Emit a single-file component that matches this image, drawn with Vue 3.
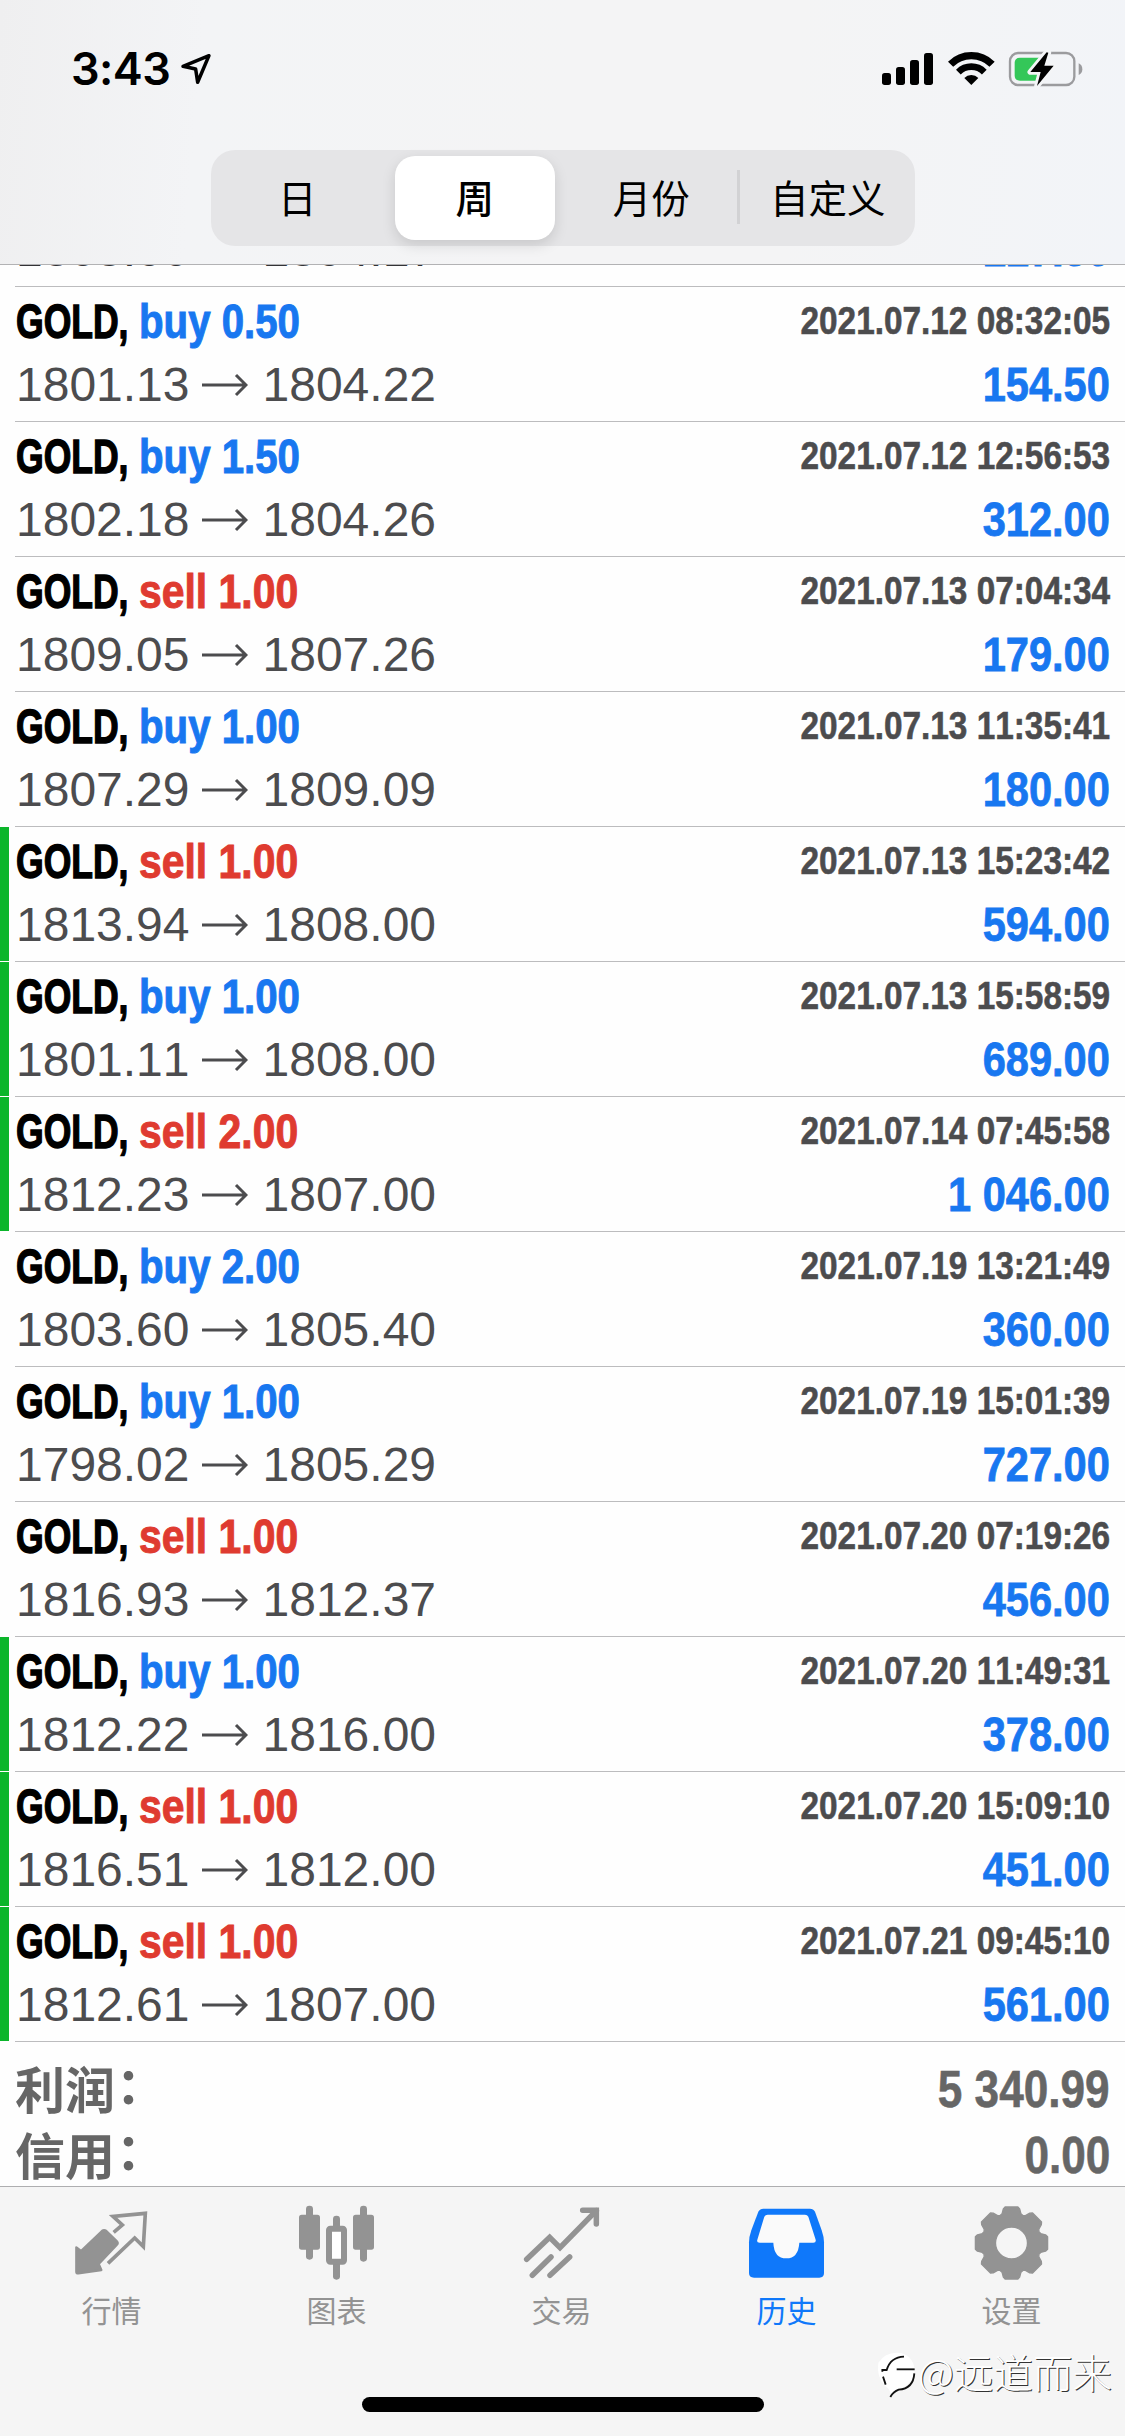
<script setup>
const periods = ['日', '周', '月份', '自定义']
const activePeriod = '周'

const deals = [
  { side: 'buy', lots: '0.50', open: '1801.13', close: '1804.22', time: '2021.07.12 08:32:05', profit: '154.50' },
  { side: 'buy', lots: '1.50', open: '1802.18', close: '1804.26', time: '2021.07.12 12:56:53', profit: '312.00' },
  { side: 'sell', lots: '1.00', open: '1809.05', close: '1807.26', time: '2021.07.13 07:04:34', profit: '179.00' },
  { side: 'buy', lots: '1.00', open: '1807.29', close: '1809.09', time: '2021.07.13 11:35:41', profit: '180.00' },
  { side: 'sell', lots: '1.00', open: '1813.94', close: '1808.00', time: '2021.07.13 15:23:42', profit: '594.00', tp: true },
  { side: 'buy', lots: '1.00', open: '1801.11', close: '1808.00', time: '2021.07.13 15:58:59', profit: '689.00', tp: true },
  { side: 'sell', lots: '2.00', open: '1812.23', close: '1807.00', time: '2021.07.14 07:45:58', profit: '1 046.00', tp: true },
  { side: 'buy', lots: '2.00', open: '1803.60', close: '1805.40', time: '2021.07.19 13:21:49', profit: '360.00' },
  { side: 'buy', lots: '1.00', open: '1798.02', close: '1805.29', time: '2021.07.19 15:01:39', profit: '727.00' },
  { side: 'sell', lots: '1.00', open: '1816.93', close: '1812.37', time: '2021.07.20 07:19:26', profit: '456.00' },
  { side: 'buy', lots: '1.00', open: '1812.22', close: '1816.00', time: '2021.07.20 11:49:31', profit: '378.00', tp: true },
  { side: 'sell', lots: '1.00', open: '1816.51', close: '1812.00', time: '2021.07.20 15:09:10', profit: '451.00', tp: true },
  { side: 'sell', lots: '1.00', open: '1812.61', close: '1807.00', time: '2021.07.21 09:45:10', profit: '561.00', tp: true }
]

const totals = [
  { label: '利润', value: '5 340.99' },
  { label: '信用', value: '0.00' }
]

// Eight-toothed gear outline, centred on (cx, cy)
function gearPath(cx, cy) {
  const profile = [[-22.5, 89], [-18, 92], [-13.5, 105], [-10, 110], [10, 110], [13.5, 105], [18, 92]]
  const pts = []
  for (let t = 0; t < 8; t++) {
    for (const [a, r] of profile) {
      const rad = ((t * 45 + a - 90) * Math.PI) / 180
      pts.push(`${(cx + r * Math.cos(rad)).toFixed(1)} ${(cy + r * Math.sin(rad)).toFixed(1)}`)
    }
  }
  return `M${pts.join('L')}Z M${cx - 48} ${cy}a48 48 0 1 0 96 0a48 48 0 1 0 -96 0Z`
}
const gear = gearPath(424.5, 160)
</script>

<template>
  <div class="screen">
    <header class="header">
      <div class="status">
        <div class="clock">
          <span class="time">3:43</span>
          <svg class="location" viewBox="355 35 100 100" fill="none" stroke="#000" stroke-width="10.500" stroke-linejoin="round">
            <path d="M445 46L367 78L405 86L411 126Z" />
          </svg>
        </div>
        <svg class="indicators" viewBox="0 0 720 180">
          <rect x="66" y="99" width="27" height="36" rx="8" />
          <rect x="108" y="81" width="27" height="54" rx="8" />
          <rect x="150" y="60" width="27" height="75" rx="8" />
          <rect x="192" y="39" width="27" height="96" rx="8" />
          <path d="M271.800 72.800A88 88 0 0 1 396.200 72.800" fill="none" stroke="#000" stroke-width="22" />
          <path d="M295.100 96.100A55 55 0 0 1 372.900 96.100" fill="none" stroke="#000" stroke-width="20" />
          <path d="M334 135L313 114A29 29 0 0 1 355 114Z" />
          <rect x="450" y="39" width="193" height="96" rx="25" fill="none" stroke="#9b9b9e" stroke-width="7" />
          <path d="M656 70Q667 75 667 87.500T656 105Z" fill="#9b9b9e" />
          <path d="M480 53H545V122H480Q464 122 464 106V69Q464 53 480 53Z" fill="#34c759" />
          <path d="M560 37L511 96H542L531 138L581 77H553L565 38Z" stroke="#f4f5f7" stroke-width="17" stroke-linejoin="round" />
          <path d="M560 37L511 96H542L531 138L581 77H553L565 38Z" />
        </svg>
      </div>
      <nav class="segments">
        <button v-for="p in periods" :key="p" class="segment" :class="{ active: p === activePeriod }">{{ p }}</button>
      </nav>
    </header>

    <main class="list">
      <div class="peek">
        <article class="deal">
          <div class="line">
            <span class="prices">1803.00<svg class="arrow" viewBox="0 0 46 24"><path d="M0 12H44M34 2L44 12L34 22" /></svg>1804.17</span>
            <span class="profit">117.50</span>
          </div>
        </article>
      </div>
      <div class="rule"></div>
      <template v-for="d in deals" :key="d.time">
        <article class="deal" :class="{ tp: d.tp }">
          <div class="line">
            <span class="title"><span class="symbol">GOLD,</span><span class="side" :class="d.side">{{ d.side }} {{ d.lots }}</span></span>
            <span class="stamp">{{ d.time }}</span>
          </div>
          <div class="line">
            <span class="prices">{{ d.open }}<svg class="arrow" viewBox="0 0 46 24"><path d="M0 12H44M34 2L44 12L34 22" /></svg>{{ d.close }}</span>
            <span class="profit">{{ d.profit }}</span>
          </div>
        </article>
        <div class="rule"></div>
      </template>
      <section class="totals">
        <div v-for="t in totals" :key="t.label" class="total">
          <span class="label">{{ t.label }}<span class="colon">：</span></span>
          <span class="sum">{{ t.value }}</span>
        </div>
      </section>
    </main>

    <footer class="tabs">
      <div class="tab">
        <svg class="icon" viewBox="210 550 255 240">
          <path d="M229 683L243 694L306 634Q312 629 319 634L350 664Q356 670 350 676L296 733L304 751L235 761Q229 761 229 756Z" fill="currentColor" stroke="currentColor" stroke-width="7" stroke-linejoin="round" />
          <path d="M341 638L367 616L339 590L436 581L430 681L404 655L324 731" fill="none" stroke="currentColor" stroke-width="11" />
        </svg>
        <span>行情</span>
      </div>
      <div class="tab">
        <svg class="icon" viewBox="885 550 255 240" fill="currentColor">
          <rect x="918" y="558" width="21" height="162" rx="10" />
          <rect x="897" y="585" width="63" height="105" rx="8" />
          <rect x="1080" y="558" width="21" height="168" rx="10" />
          <rect x="1059" y="585" width="63" height="105" rx="8" />
          <rect x="999" y="588" width="21" height="60" rx="10" />
          <rect x="999" y="722" width="21" height="58" rx="10" />
          <rect x="987" y="627" width="45" height="99" rx="4" fill="#fff" stroke="currentColor" stroke-width="18" />
        </svg>
        <span>图表</span>
      </div>
      <div class="tab">
        <svg class="icon" viewBox="60 40 255 240" fill="none" stroke="currentColor" stroke-width="16.500" stroke-linecap="round">
          <path d="M80 209L149 143L180 174L289 63" />
          <path d="M248 62H289V103" />
          <path d="M97 257L153 202M150 257L209 202" />
        </svg>
        <span>交易</span>
      </div>
      <div class="tab current">
        <svg class="icon" viewBox="735 40 255 240">
          <path d="M790 57H930Q940 57 945 66L965 122Q972 142 972 158V250Q972 264 958 264H762Q747 264 747 250V158Q747 142 754 122L775 66Q780 57 790 57Z" fill="currentColor" />
          <path d="M803 75H915Q922 75 925 81L947 150Q949 159 940 159H898Q895 206 859 206Q822 206 820 159H779Q769 159 772 150L793 81Q796 75 803 75Z" fill="#fafafa" />
        </svg>
        <span>历史</span>
      </div>
      <div class="tab">
        <svg class="icon" viewBox="300 40 255 240">
          <path :d="gear" fill="currentColor" fill-rule="evenodd" stroke="currentColor" stroke-width="4" stroke-linejoin="round" />
        </svg>
        <span>设置</span>
      </div>
    </footer>

    <div class="home-bar"></div>
    <div class="credit">
      <svg class="credit-logo" viewBox="18 485 120 145" fill="none" stroke="#111" stroke-width="5.500">
        <path d="M25 520Q45 488 85 490Q128 495 134 540Q132 580 98 595Q74 602 64 620Q62 600 45 590Q18 560 25 520Z" fill="#fff" stroke="none" />
        <path d="M37 547V542H50Q62 503 102 502" />
        <path d="M39 562L47 586" />
        <path d="M80 540H134" />
        <path d="M133 552Q130 598 86 601Q70 607 61 623" />
      </svg>
      <span>@远道而来</span>
    </div>
  </div>
</template>

<style>
body {
  margin: 0;
  background: #fff;
}
</style>

<style scoped>
.screen {
  position: relative;
  display: flex;
  flex-direction: column;
  width: 1125px;
  height: 2436px;
  overflow: hidden;
  background: #fefefe;
  font-family: "Liberation Sans", "Noto Sans CJK SC", sans-serif;
  font-kerning: none;
}
.header {
  box-sizing: border-box;
  flex: none;
  height: 265px;
  border-bottom: 1px solid #b2b2b4;
  background: linear-gradient(95deg, #efeff0 0%, #f3f4f6 18%, #f4f4f5 50%, #f4f4f5 70%, #f2f4f8 100%);
}
.status {
  display: flex;
  justify-content: space-between;
  box-sizing: border-box;
  height: 150px;
  padding: 40px 25px 0 71px;
}
.clock {
  display: flex;
}
.time {
  width: 108px;
  padding-top: 2px;
  font: 600 45px/54px Inter, sans-serif;
  letter-spacing: -0.600px;
}
.location {
  width: 33.300px;
  height: 33.300px;
  margin-top: 12px;
}
.indicators {
  width: 240px;
  height: 60px;
}
.segments {
  display: flex;
  width: 704px;
  height: 96px;
  margin: 0 auto;
  border-radius: 24px;
  background: #e5e5e7;
}
.segment {
  flex: 1;
  margin: 6px 7px;
  padding: 0 0 3px;
  border: 0;
  border-radius: 20px;
  background: none;
  color: #000;
  font: 400 38.500px/1 "Noto Sans CJK SC", sans-serif;
  white-space: nowrap;
}
.segment:first-child {
  padding-right: 4px;
}
.segment:nth-child(3) {
  padding-left: 3px;
}
.segment.active {
  background: #fff;
  box-shadow: 0 5px 14px rgba(0, 0, 0, 0.13);
  font-weight: 500;
}
.segment:last-child {
  position: relative;
  padding-left: 3px;
}
.segment:last-child::before {
  content: "";
  position: absolute;
  left: -8px;
  top: 14px;
  width: 3px;
  height: 54px;
  background: #d2d2d4;
}
.list {
  flex: none;
  height: 1921px;
  overflow: hidden;
}
.peek {
  display: flex;
  flex-direction: column;
  justify-content: flex-end;
  height: 21px;
  overflow: hidden;
}
.peek .deal {
  flex: none;
  height: 71px;
}
.peek .profit {
  -webkit-text-stroke: 1.200px currentColor;
}
.peek .prices {
  color: #333336;
}
.rule {
  height: 1px;
  margin-left: 15px;
  background: #bcbcbe;
}
.deal {
  box-sizing: border-box;
  height: 134px;
  padding: 3px 15px 5px 7px;
  border-left: 9px solid transparent;
}
.deal.tp {
  border-left-color: #0bb52b;
}
.line {
  display: flex;
  justify-content: space-between;
  height: 63px;
  line-height: 63px;
  font-size: 48px;
  white-space: nowrap;
}
.title {
  display: flex;
  font-weight: 700;
}
.symbol {
  width: 123px;
  transform: scaleX(0.740);
  transform-origin: left;
  -webkit-text-stroke: 1.400px currentColor;
}
.side {
  transform-origin: left;
  -webkit-text-stroke: 1px currentColor;
}
.buy {
  color: #1877f0;
  transform: scaleX(0.838);
}
.sell {
  color: #df3b30;
  transform: scaleX(0.852);
}
.stamp {
  color: #4c4c4e;
  font-size: 39px;
  font-weight: 700;
  line-height: 61px;
  transform: scaleX(0.855);
  transform-origin: right;
  -webkit-text-stroke: 0.600px currentColor;
}
.prices {
  display: flex;
  align-items: center;
  color: #4c4c4e;
}
.arrow {
  width: 46px;
  height: 24px;
  margin: 1px 15px 0 12px;
  fill: none;
  stroke: #4c4c4e;
  stroke-width: 3;
}
.profit {
  color: #1877f0;
  font-weight: 700;
  transform: scaleX(0.866);
  transform-origin: right;
  -webkit-text-stroke: 0.800px currentColor;
}
.totals {
  padding: 15px 15px 0;
  color: #666;
  font-weight: 700;
}
.total {
  display: flex;
  justify-content: space-between;
  height: 66px;
  line-height: 66px;
  font-size: 51px;
}
.label {
  margin-top: -3px;
  font-family: "Noto Sans CJK SC", sans-serif;
  font-size: 50px;
  font-weight: 700;
}
.colon {
  position: relative;
  top: -5px;
  left: 1px;
}
.sum {
  transform: scaleX(0.865);
  transform-origin: right;
  -webkit-text-stroke: 0.600px currentColor;
}
.tabs {
  display: flex;
  flex: 1;
  border-top: 1px solid #aeaeb0;
  background: #f5f5f5;
}
.tab {
  display: flex;
  flex: 1;
  flex-direction: column;
  align-items: center;
  padding-top: 16px;
  color: #939393;
  font: 400 30px/42px "Noto Sans CJK SC", sans-serif;
}
.tab span {
  margin-right: 2px;
}
.tab.current {
  color: #0f78fa;
}
.icon {
  width: 85px;
  height: 80px;
  margin-bottom: 5px;
}
.home-bar {
  position: absolute;
  left: 362px;
  bottom: 24px;
  width: 402px;
  height: 15px;
  border-radius: 8px;
  background: #000;
}
.credit {
  position: absolute;
  left: 876px;
  top: 2350px;
  display: flex;
  color: #fff;
  font: 300 39.500px/42px "Noto Sans CJK SC", sans-serif;
  text-shadow: 1px 1px 0 #333;
}
.credit-logo {
  width: 40px;
  height: 48.300px;
  margin-top: 1px;
  margin-right: 2px;
}
</style>
